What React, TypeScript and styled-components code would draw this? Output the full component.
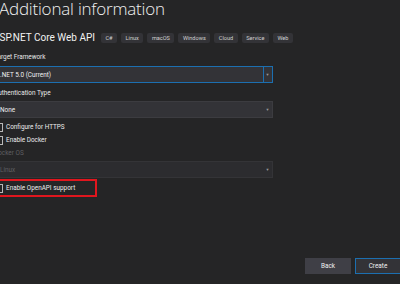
import React from 'react';
import styled, { createGlobalStyle } from 'styled-components';

const GlobalStyle = createGlobalStyle`
  html, body {
    margin: 0;
    padding: 0;
    background: #252526;
  }
  body {
    font-family: Roboto, "Noto Sans", sans-serif;
    color: #f1f1f1;
  }
`;

const Page = styled.div`
  display: flex;
  flex-direction: column;
  width: 400px;
  height: 284px;
  overflow: hidden;
  background: #252526;
`;

const Title = styled.h1`
  margin: 0 0 0 -1px;
  height: 20px;
  font-family: "Open Sans", "Noto Sans", sans-serif;
  font-weight: 300;
  font-size: 17px;
  letter-spacing: -0.2px;
  line-height: 18px;
  color: #f1f1f1;
  white-space: nowrap;
`;

const Header = styled.div`
  display: flex;
  align-items: center;
  gap: 4px;
  height: 12px;
  margin: 12px 0 0 -7px;
`;

const ProjectName = styled.span`
  font-size: 10px;
  line-height: 12px;
  margin-right: 2px;
  white-space: nowrap;
  color: #f1f1f1;
`;

const Tag = styled.span`
  display: inline-flex;
  align-items: center;
  height: 10px;
  padding: 0 4.5px;
  border-radius: 2px;
  background: #333337;
  color: #d0d0d0;
  font-size: 5.6px;
  white-space: nowrap;
`;

const Form = styled.div`
  display: flex;
  flex-direction: column;
  width: 281px;
  margin-left: -8px;
`;

const Label = styled.div<{ $mt: number; $mb: number; $disabled?: boolean }>`
  height: 12px;
  line-height: 12px;
  margin: ${(p) => p.$mt}px 0 ${(p) => p.$mb}px 2px;
  font-size: 6.4px;
  color: ${(p) => (p.$disabled ? '#5f5f62' : '#e8e8e8')};
  white-space: nowrap;
`;

const Select = styled.div<{ $focused?: boolean; $disabled?: boolean }>`
  display: flex;
  align-items: stretch;
  height: 17px;
  box-sizing: border-box;
  border: 1px solid ${(p) => (p.$focused ? '#1c6fb0' : p.$disabled ? '#343437' : '#3c3c40')};
  background: ${(p) => (p.$disabled ? '#2c2c2f' : '#333337')};
  color: ${(p) => (p.$disabled ? '#5f5f62' : '#f1f1f1')};
`;

const SelectValue = styled.span`
  flex: 1;
  display: flex;
  align-items: center;
  padding-left: 7px;
  font-size: 6.4px;
  white-space: nowrap;
`;

const Arrow = styled.span<{ $focused?: boolean }>`
  display: flex;
  align-items: center;
  justify-content: center;
  width: 7px;
  border-left: 1px solid ${(p) => (p.$focused ? '#1c6fb0' : 'transparent')};
  color: #9a9a9a;
  font-size: 4px;
  margin-right: 1px;
`;

const CheckRow = styled.div<{ $mt: number; $highlighted?: boolean }>`
  display: flex;
  align-items: center;
  gap: 3px;
  width: ${(p) => (p.$highlighted ? '105px' : 'auto')};
  box-sizing: border-box;
  height: ${(p) => (p.$highlighted ? '18px' : '12px')};
  margin-top: ${(p) => p.$mt}px;
  padding-left: ${(p) => (p.$highlighted ? '0' : '2px')};
  border: ${(p) => (p.$highlighted ? '2px solid #e0161e' : 'none')};
`;

const Box = styled.span`
  width: 9px;
  height: 9px;
  box-sizing: border-box;
  border: 1px solid #b8b8b8;
  background: #252526;
`;

const CheckText = styled.span`
  font-size: 6.4px;
  color: #ececec;
  white-space: nowrap;
`;

const Footer = styled.div`
  display: flex;
  justify-content: flex-end;
  gap: 4px;
  margin-top: auto;
  margin-bottom: 10px;
  margin-right: -1px;
`;

const Button = styled.button<{ $primary?: boolean }>`
  width: 46px;
  height: 16px;
  padding: 0;
  box-sizing: border-box;
  border: 1px solid ${(p) => (p.$primary ? '#1c6fb0' : '#3f3f46')};
  background: ${(p) => (p.$primary ? '#333337' : '#3f3f46')};
  color: #f1f1f1;
  font-family: Roboto, "Noto Sans", sans-serif;
  font-size: 6.4px;
  cursor: pointer;
`;

const tags = ['C#', 'Linux', 'macOS', 'Windows', 'Cloud', 'Service', 'Web'];

const App: React.FC = () => {
  return (
    <Page>
      <GlobalStyle />
      <Title>Additional information</Title>
      <Header>
        <ProjectName>ASP.NET Core Web API</ProjectName>
        {tags.map((t) => (
          <Tag key={t}>{t}</Tag>
        ))}
      </Header>
      <Form>
        <Label $mt={7} $mb={3}>Target Framework</Label>
        <Select $focused>
          <SelectValue>.NET 5.0 (Current)</SelectValue>
          <Arrow $focused>▼</Arrow>
        </Select>
        <Label $mt={4} $mb={2}>Authentication Type</Label>
        <Select>
          <SelectValue>None</SelectValue>
          <Arrow>▼</Arrow>
        </Select>
        <CheckRow $mt={3}>
          <Box />
          <CheckText>Configure for HTTPS</CheckText>
        </CheckRow>
        <CheckRow $mt={1}>
          <Box />
          <CheckText>Enable Docker</CheckText>
        </CheckRow>
        <Label $mt={1} $mb={2} $disabled>Docker OS</Label>
        <Select $disabled>
          <SelectValue>Linux</SelectValue>
          <Arrow>▼</Arrow>
        </Select>
        <CheckRow $mt={1} $highlighted>
          <Box />
          <CheckText>Enable OpenAPI support</CheckText>
        </CheckRow>
      </Form>
      <Footer>
        <Button>Back</Button>
        <Button $primary>Create</Button>
      </Footer>
    </Page>
  );
};

export default App;
